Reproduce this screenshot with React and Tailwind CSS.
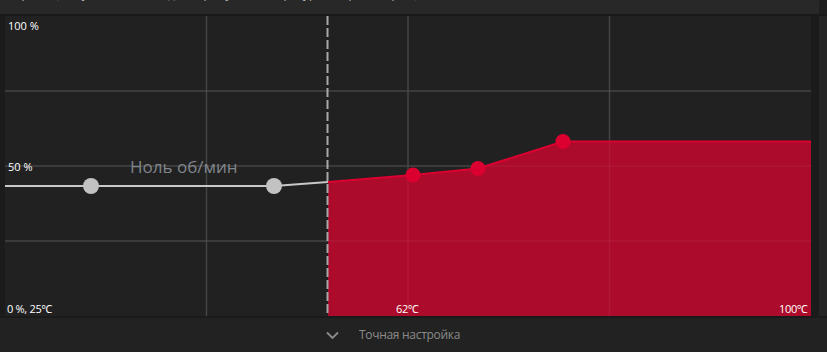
const W = 806;
const H = 300;

const grayPts = [
  [86, 170],
  [269, 170],
];
const redPts = [
  [408, 159],
  [473, 152.5],
  [558, 125.5],
];
const gridX = [201.5, 403, 604.5];
const gridY = [75, 150, 225];

function FanChart() {
  const redLine = `323,166 ${redPts.map((p) => p.join(',')).join(' ')} ${W},125.5`;
  const redArea = `${redLine} ${W},${H} 323,${H}`;

  return (
    <svg width={W} height={H} viewBox={`0 0 ${W} ${H}`} className="block">
      {/* grid */}
      {gridX.map((x) => (
        <line key={x} x1={x} y1="0" x2={x} y2={H} stroke="#3b3b3b" strokeWidth="1.5" />
      ))}
      {gridY.map((y) => (
        <line key={y} x1="0" y1={y} x2={W} y2={y} stroke="#3b3b3b" strokeWidth="1.5" />
      ))}

      {/* fill under curve, grid faintly shows through */}
      <polygon points={redArea} fill="#ad0b2c" />
      {gridX.map((x) => (
        <line key={x} x1={x} y1="0" x2={x} y2={H} stroke="rgba(255,255,255,0.05)" strokeWidth="1.5" />
      ))}
      {gridY.map((y) => (
        <line key={y} x1="0" y1={y} x2={W} y2={y} stroke="rgba(255,255,255,0.05)" strokeWidth="1.5" />
      ))}

      {/* zero rpm segment */}
      <polyline points="0,170 86,170 269,170 323,166" fill="none" stroke="#c8c8c8" strokeWidth="2" />

      {/* threshold */}
      <line x1="322.5" y1="0" x2="322.5" y2={H} stroke="#a8a8a8" strokeWidth="2" strokeDasharray="9 3" />

      <polyline points={redLine} fill="none" stroke="#dc0030" strokeWidth="2" />

      {grayPts.map(([x, y]) => (
        <circle key={x} cx={x} cy={y} r="8" fill="#c2c2c2" />
      ))}
      {redPts.map(([x, y]) => (
        <circle key={x} cx={x} cy={y} r="7.5" fill="#dc0030" />
      ))}
    </svg>
  );
}

export default function App() {
  return (
    <div
      className="w-[827px] h-[352px] bg-[#222222] flex flex-col overflow-hidden"
      style={{ fontFamily: '"Open Sans", "Noto Sans", "Liberation Sans", sans-serif' }}
    >
      {/* top strip, text cut off above */}
      <div className="h-[14px] flex shrink-0">
        <div className="w-[819px] bg-[#282828] overflow-hidden relative">
          <span className="absolute left-[6px] top-[-13px] text-[12px] leading-[14px] text-[#b8b8b8] whitespace-nowrap">
            Перетащите узлы, чтобы задать кривую (температура, скорость вращения)
          </span>
        </div>
        <div className="flex-1 bg-[#1f1f1f]" />
      </div>
      <div className="h-[2px] bg-[#1a1a1a] shrink-0" />

      {/* chart row */}
      <div className="h-[300px] flex shrink-0">
        <div className="w-[5px] bg-[#1b1b1b]" />
        <div className="relative w-[806px] h-[300px] bg-[#212121]">
          <FanChart />
          <span className="absolute left-[3px] top-[2px] text-[11px] leading-[16px] text-white">100 %</span>
          <span className="absolute left-[3px] top-[143px] text-[11px] leading-[16px] text-white">50 %</span>
          <span className="absolute left-[125px] top-[139px] text-[17px] leading-[24px] text-[#80858c]">
            Ноль об/мин
          </span>
          <span className="absolute left-[2px] top-[285px] text-[11px] leading-[16px] text-white tracking-[-0.3px]">
            0 %, 25℃
          </span>
          <span className="absolute left-[391px] top-[285px] text-[11px] leading-[16px] text-white tracking-[-0.3px]">
            62℃
          </span>
          <span className="absolute left-[774px] top-[285px] text-[11px] leading-[16px] text-white tracking-[-0.3px]">
            100℃
          </span>
        </div>
        <div className="w-[8px] bg-[#1b1b1b]" />
        <div className="flex-1 bg-[#252525]" />
      </div>
      <div className="h-[2px] bg-[#1a1a1a] shrink-0" />

      {/* fine tuning toggle */}
      <div className="flex-1 flex items-center pl-[326px] gap-[20px] bg-[#222222]">
        <svg width="13" height="9" viewBox="0 0 13 9" fill="none" stroke="#8c8c8c" strokeWidth="1.8">
          <polyline points="1,1.5 6.5,7 12,1.5" />
        </svg>
        <span className="text-[12px] text-[#8a8a8a] tracking-[-0.3px]">Точная настройка</span>
      </div>
    </div>
  );
}
